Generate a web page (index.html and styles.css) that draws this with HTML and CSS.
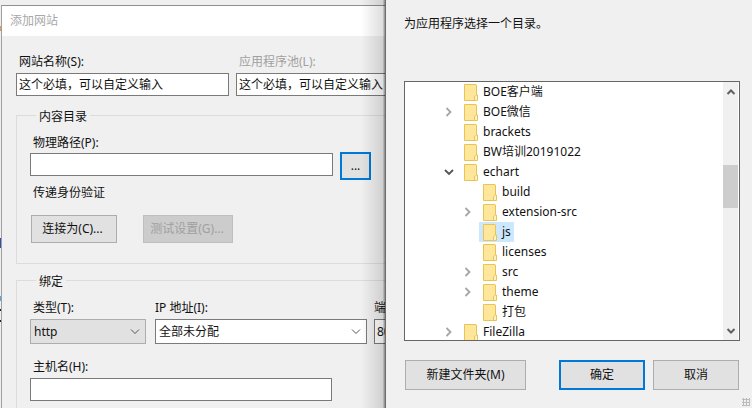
FILE: index.html
```html
<!DOCTYPE html>
<html lang="zh-CN">
<head>
    <meta charset="UTF-8">
    <title>添加网站</title>
    <link rel="stylesheet" href="styles.css">
</head>
<body>
    <svg class="defs" width="0" height="0">
        <symbol id="folder" viewBox="0 0 14 17">
            <path d="M.5.5h11.500l.5.5v15.500h-12z" fill="#fee79b" stroke="#e9c455"/>
            <path d="M10.500 16.500v-4l2-1.500h1v5.500z" fill="#fff3c4" stroke="#e9c455"/>
        </symbol>
        <symbol id="twisty-right" viewBox="0 0 10 12">
            <path d="M2.500 2l4 4-4 4" fill="none" stroke="#a6a6a6" stroke-width="1.800"/>
        </symbol>
        <symbol id="twisty-down" viewBox="0 0 10 12">
            <path d="M1 4l4 4 4-4" fill="none" stroke="#555" stroke-width="1.800"/>
        </symbol>
        <symbol id="caret" viewBox="0 0 10 6">
            <path d="M1 .5l4 4 4-4" fill="none" stroke="#555" stroke-width="1"/>
        </symbol>
    </svg>

    <div class="site-window">
        <div class="title-bar">添加网站</div>
        <div class="site-body">
            <div class="name-row">
                <div class="name-field">
                    <label>网站名称(S):</label>
                    <div class="input name-input">这个必填，可以自定义输入</div>
                </div>
                <div class="pool-field">
                    <label class="muted">应用程序池(L):</label>
                    <div class="input name-input">这个必填，可以自定义输入</div>
                </div>
            </div>

            <fieldset class="group content-group">
                <legend>内容目录</legend>
                <label class="path-label">物理路径(P):</label>
                <div class="path-row">
                    <div class="input path-input"></div>
                    <button class="btn browse-btn">...</button>
                </div>
                <div class="auth-label">传递身份验证</div>
                <div class="auth-row">
                    <button class="btn connect-btn">连接为(C)...</button>
                    <button class="btn test-btn">测试设置(G)...</button>
                </div>
            </fieldset>

            <fieldset class="group binding-group">
                <legend>绑定</legend>
                <div class="binding-row">
                    <div class="type-field">
                        <label>类型(T):</label>
                        <div class="select type-select">http<svg class="caret"><use href="#caret"/></svg></div>
                    </div>
                    <div class="ip-field">
                        <label>IP 地址(I):</label>
                        <div class="select ip-select">全部未分配<svg class="caret"><use href="#caret"/></svg></div>
                    </div>
                    <div class="port-field">
                        <label>端口(O):</label>
                        <div class="input port-input">80</div>
                    </div>
                </div>
                <label class="host-label">主机名(H):</label>
                <div class="input host-input"></div>
            </fieldset>
        </div>
    </div>

    <div class="browse-window">
        <p class="browse-text">为应用程序选择一个目录。</p>
        <div class="tree">
            <ul class="tree-list">
                <li class="row"><span class="twisty"></span><span class="item"><svg class="folder"><use href="#folder"/></svg>BOE客户端</span></li>
                <li class="row"><span class="twisty"><svg><use href="#twisty-right"/></svg></span><span class="item"><svg class="folder"><use href="#folder"/></svg>BOE微信</span></li>
                <li class="row"><span class="twisty"></span><span class="item"><svg class="folder"><use href="#folder"/></svg>brackets</span></li>
                <li class="row"><span class="twisty"></span><span class="item"><svg class="folder"><use href="#folder"/></svg>BW培训20191022</span></li>
                <li class="row"><span class="twisty"><svg><use href="#twisty-down"/></svg></span><span class="item"><svg class="folder"><use href="#folder"/></svg>echart</span></li>
                <li class="row child"><span class="twisty"></span><span class="item"><svg class="folder"><use href="#folder"/></svg>build</span></li>
                <li class="row child"><span class="twisty"><svg><use href="#twisty-right"/></svg></span><span class="item"><svg class="folder"><use href="#folder"/></svg>extension-src</span></li>
                <li class="row child"><span class="twisty"></span><span class="item selected"><svg class="folder"><use href="#folder"/></svg>js</span></li>
                <li class="row child"><span class="twisty"></span><span class="item"><svg class="folder"><use href="#folder"/></svg>licenses</span></li>
                <li class="row child"><span class="twisty"><svg><use href="#twisty-right"/></svg></span><span class="item"><svg class="folder"><use href="#folder"/></svg>src</span></li>
                <li class="row child"><span class="twisty"><svg><use href="#twisty-right"/></svg></span><span class="item"><svg class="folder"><use href="#folder"/></svg>theme</span></li>
                <li class="row child"><span class="twisty"></span><span class="item"><svg class="folder"><use href="#folder"/></svg>打包</span></li>
                <li class="row"><span class="twisty"><svg><use href="#twisty-right"/></svg></span><span class="item"><svg class="folder"><use href="#folder"/></svg>FileZilla</span></li>
            </ul>
            <div class="scrollbar">
                <svg class="arrow" viewBox="0 0 10 8"><path d="M1.500 6L5 2.500 8.500 6" fill="none" stroke="#606060" stroke-width="2"/></svg>
                <div class="thumb"></div>
                <svg class="arrow arrow-down" viewBox="0 0 10 8"><path d="M1.500 2L5 5.500 8.500 2" fill="none" stroke="#606060" stroke-width="2"/></svg>
            </div>
        </div>
        <div class="browse-actions">
            <button class="btn new-btn">新建文件夹(M)</button>
            <button class="btn ok-btn">确定</button>
            <button class="btn cancel-btn">取消</button>
        </div>
    </div>
</body>
</html>
```

FILE: styles.css
```css
html, body {
    margin: 0;
    padding: 0;
}
body {
    position: relative;
    width: 752px;
    height: 408px;
    overflow: hidden;
    background-color: #efefef;
    /* the bits of desktop that show down the left edge */
    background-image: linear-gradient(to bottom,
        transparent 26px, #e0a050 26px, #e0a050 31px,
        transparent 31px, transparent 238px, #2f4fa8 238px, #2f4fa8 248px,
        transparent 248px, transparent 296px, #5aa5e0 296px, #5aa5e0 301px,
        transparent 301px, transparent 309px, #222 309px, #222 311px,
        transparent 311px, transparent 320px, #222 320px, #222 322px,
        transparent 322px);
    background-size: 1px 100%;
    background-repeat: no-repeat;
    font-family: "Noto Sans", "Noto Sans CJK SC", sans-serif;
    font-size: 12px;
    line-height: 16px;
    color: #111;
}
.defs {
    position: absolute;
}
label {
    display: block;
}
button {
    font: inherit;
    color: inherit;
    padding: 0;
}

/* windows sit on a desktop, so these two are placed by hand */
.site-window {
    position: absolute;
    left: 1px;
    top: 5px;
    width: 384px;
    height: 403px;
    overflow: hidden;
    border-top: 1px solid #8f8f8f;
    border-left: 1px solid #a0a0a0;
    box-sizing: border-box;
    background-color: #f0f0f0;
}
.title-bar {
    height: 30px;
    padding-left: 8px;
    background-color: #fff;
    color: #a8a8a8;
    line-height: 30px;
}
.site-body {
    padding: 18px 0 0 14px;
}
.input {
    box-sizing: border-box;
    height: 23px;
    padding-left: 2px;
    border: 1px solid #7a7a7a;
    background-color: #fff;
    line-height: 21px;
    white-space: nowrap;
    overflow: hidden;
}
.muted {
    color: #a0a0a0;
}
.name-row {
    display: flex;
    gap: 7px;
}
.name-row label {
    padding-left: 3px;
    margin-bottom: 3px;
}
.name-field {
    width: 213px;
    flex: none;
}
.pool-field {
    width: 160px;
    flex: none;
}
.group {
    box-sizing: border-box;
    width: 400px;
    margin: 0;
    padding: 0 0 0 13px;
    border: 1px solid #dcdcdc;
}
.group legend {
    padding: 4px 3px 0;
    margin-left: 6px;
}
.content-group {
    height: 159px;
    margin-top: 9px;
}
.path-label {
    margin-top: 10px;
    padding-left: 3px;
    margin-bottom: 2px;
}
.path-row {
    display: flex;
    gap: 7px;
    align-items: flex-start;
}
.path-input {
    width: 303px;
}
.btn {
    box-sizing: border-box;
    border: 1px solid #adadad;
    background-color: #e1e1e1;
}
.browse-btn {
    width: 31px;
    height: 28px;
    margin-top: -1px;
    border: 2px solid #0078d7;
}
.auth-label {
    margin-top: 5px;
    padding-left: 3px;
}
.auth-row {
    display: flex;
    gap: 26px;
    margin-top: 14px;
    padding-left: 1px;
}
.connect-btn {
    width: 86px;
    height: 28px;
    padding-right: 3px;
}
.test-btn {
    width: 90px;
    height: 28px;
    padding-right: 2px;
    border-color: #bfbfbf;
    background-color: #cccccc;
    color: #a0a0a0;
}
.binding-group {
    height: 140px;
    margin-top: 6px;
}
.binding-row {
    display: flex;
    gap: 9px;
    margin-top: 10px;
}
.binding-row label {
    margin-bottom: 3px;
}
.type-field label {
    padding-left: 3px;
}
.type-field {
    width: 116px;
}
.ip-field {
    width: 212px;
}
.port-field {
    margin-left: -2px;
    width: 60px;
}
.select {
    box-sizing: border-box;
    display: flex;
    justify-content: space-between;
    align-items: center;
    height: 25px;
    padding: 0 5px 0 3px;
    border: 1px solid #7a7a7a;
    background-color: #fff;
}
.type-select {
    border-color: #adadad;
    background-color: #e1e1e1;
}
.caret {
    width: 10px;
    height: 6px;
}
.port-input {
    height: 25px;
    line-height: 23px;
}
.host-label {
    margin-top: 15px;
    margin-bottom: 3px;
    padding-left: 3px;
}
.host-input {
    width: 302px;
}

.browse-window {
    position: absolute;
    left: 385px;
    top: 0;
    width: 367px;
    height: 408px;
    box-sizing: border-box;
    padding-left: 18px;
    border-left: 1px solid #6d6d6d;
    background-color: #f0f0f0;
}
/* shadow this window drops on the one behind it */
.browse-window::before {
    content: "";
    position: absolute;
    left: -25px;
    top: 0;
    bottom: 0;
    width: 24px;
    background: linear-gradient(to right, rgba(0, 0, 0, 0), rgba(0, 0, 0, 0.13) 90%, rgba(0, 0, 0, 0.45));
}
.browse-window::after {
    content: "";
    position: absolute;
    right: 2px;
    bottom: 2px;
    width: 8px;
    height: 8px;
    background-image: radial-gradient(#bbb 1px, transparent 1.200px);
    background-size: 3px 3px;
}
.browse-text {
    margin: 16px 0 0;
}
.tree {
    box-sizing: border-box;
    display: flex;
    width: 336px;
    height: 260px;
    margin-top: 49px;
    border: 1px solid #666;
    background-color: #fff;
    overflow: hidden;
}
.tree-list {
    flex: 1;
    margin: 0;
    padding: 0;
    list-style: none;
    overflow: hidden;
}
.row {
    display: flex;
    align-items: stretch;
    height: 20px;
    padding-left: 38px;
    line-height: 20px;
}
.row.child {
    padding-left: 57px;
}
.twisty {
    display: flex;
    align-items: center;
    width: 17px;
}
.twisty svg {
    width: 10px;
    height: 12px;
    margin-left: 1px;
}
.item {
    display: flex;
    align-items: center;
    gap: 5px;
    padding: 0 3px 0 4px;
}
.item.selected {
    background-color: #cce8ff;
}
.folder {
    width: 14px;
    height: 17px;
}
.scrollbar {
    position: relative;
    width: 15px;
    margin-right: 1px;
    background-color: #f0f0f0;
}
.arrow {
    position: absolute;
    left: 3px;
    top: 6px;
    width: 10px;
    height: 8px;
}
.arrow-down {
    top: auto;
    bottom: 5px;
}
.thumb {
    height: 43px;
    margin-top: 83px;
    background-color: #cdcdcd;
}
.browse-actions {
    display: flex;
    margin-top: 19px;
    padding-left: 1px;
}
.browse-actions .btn {
    height: 30px;
}
.new-btn {
    width: 121px;
}
.ok-btn {
    width: 86px;
    margin-left: 33px;
    border: 2px solid #0078d7;
}
.cancel-btn {
    width: 86px;
    margin-left: 8px;
}
```
